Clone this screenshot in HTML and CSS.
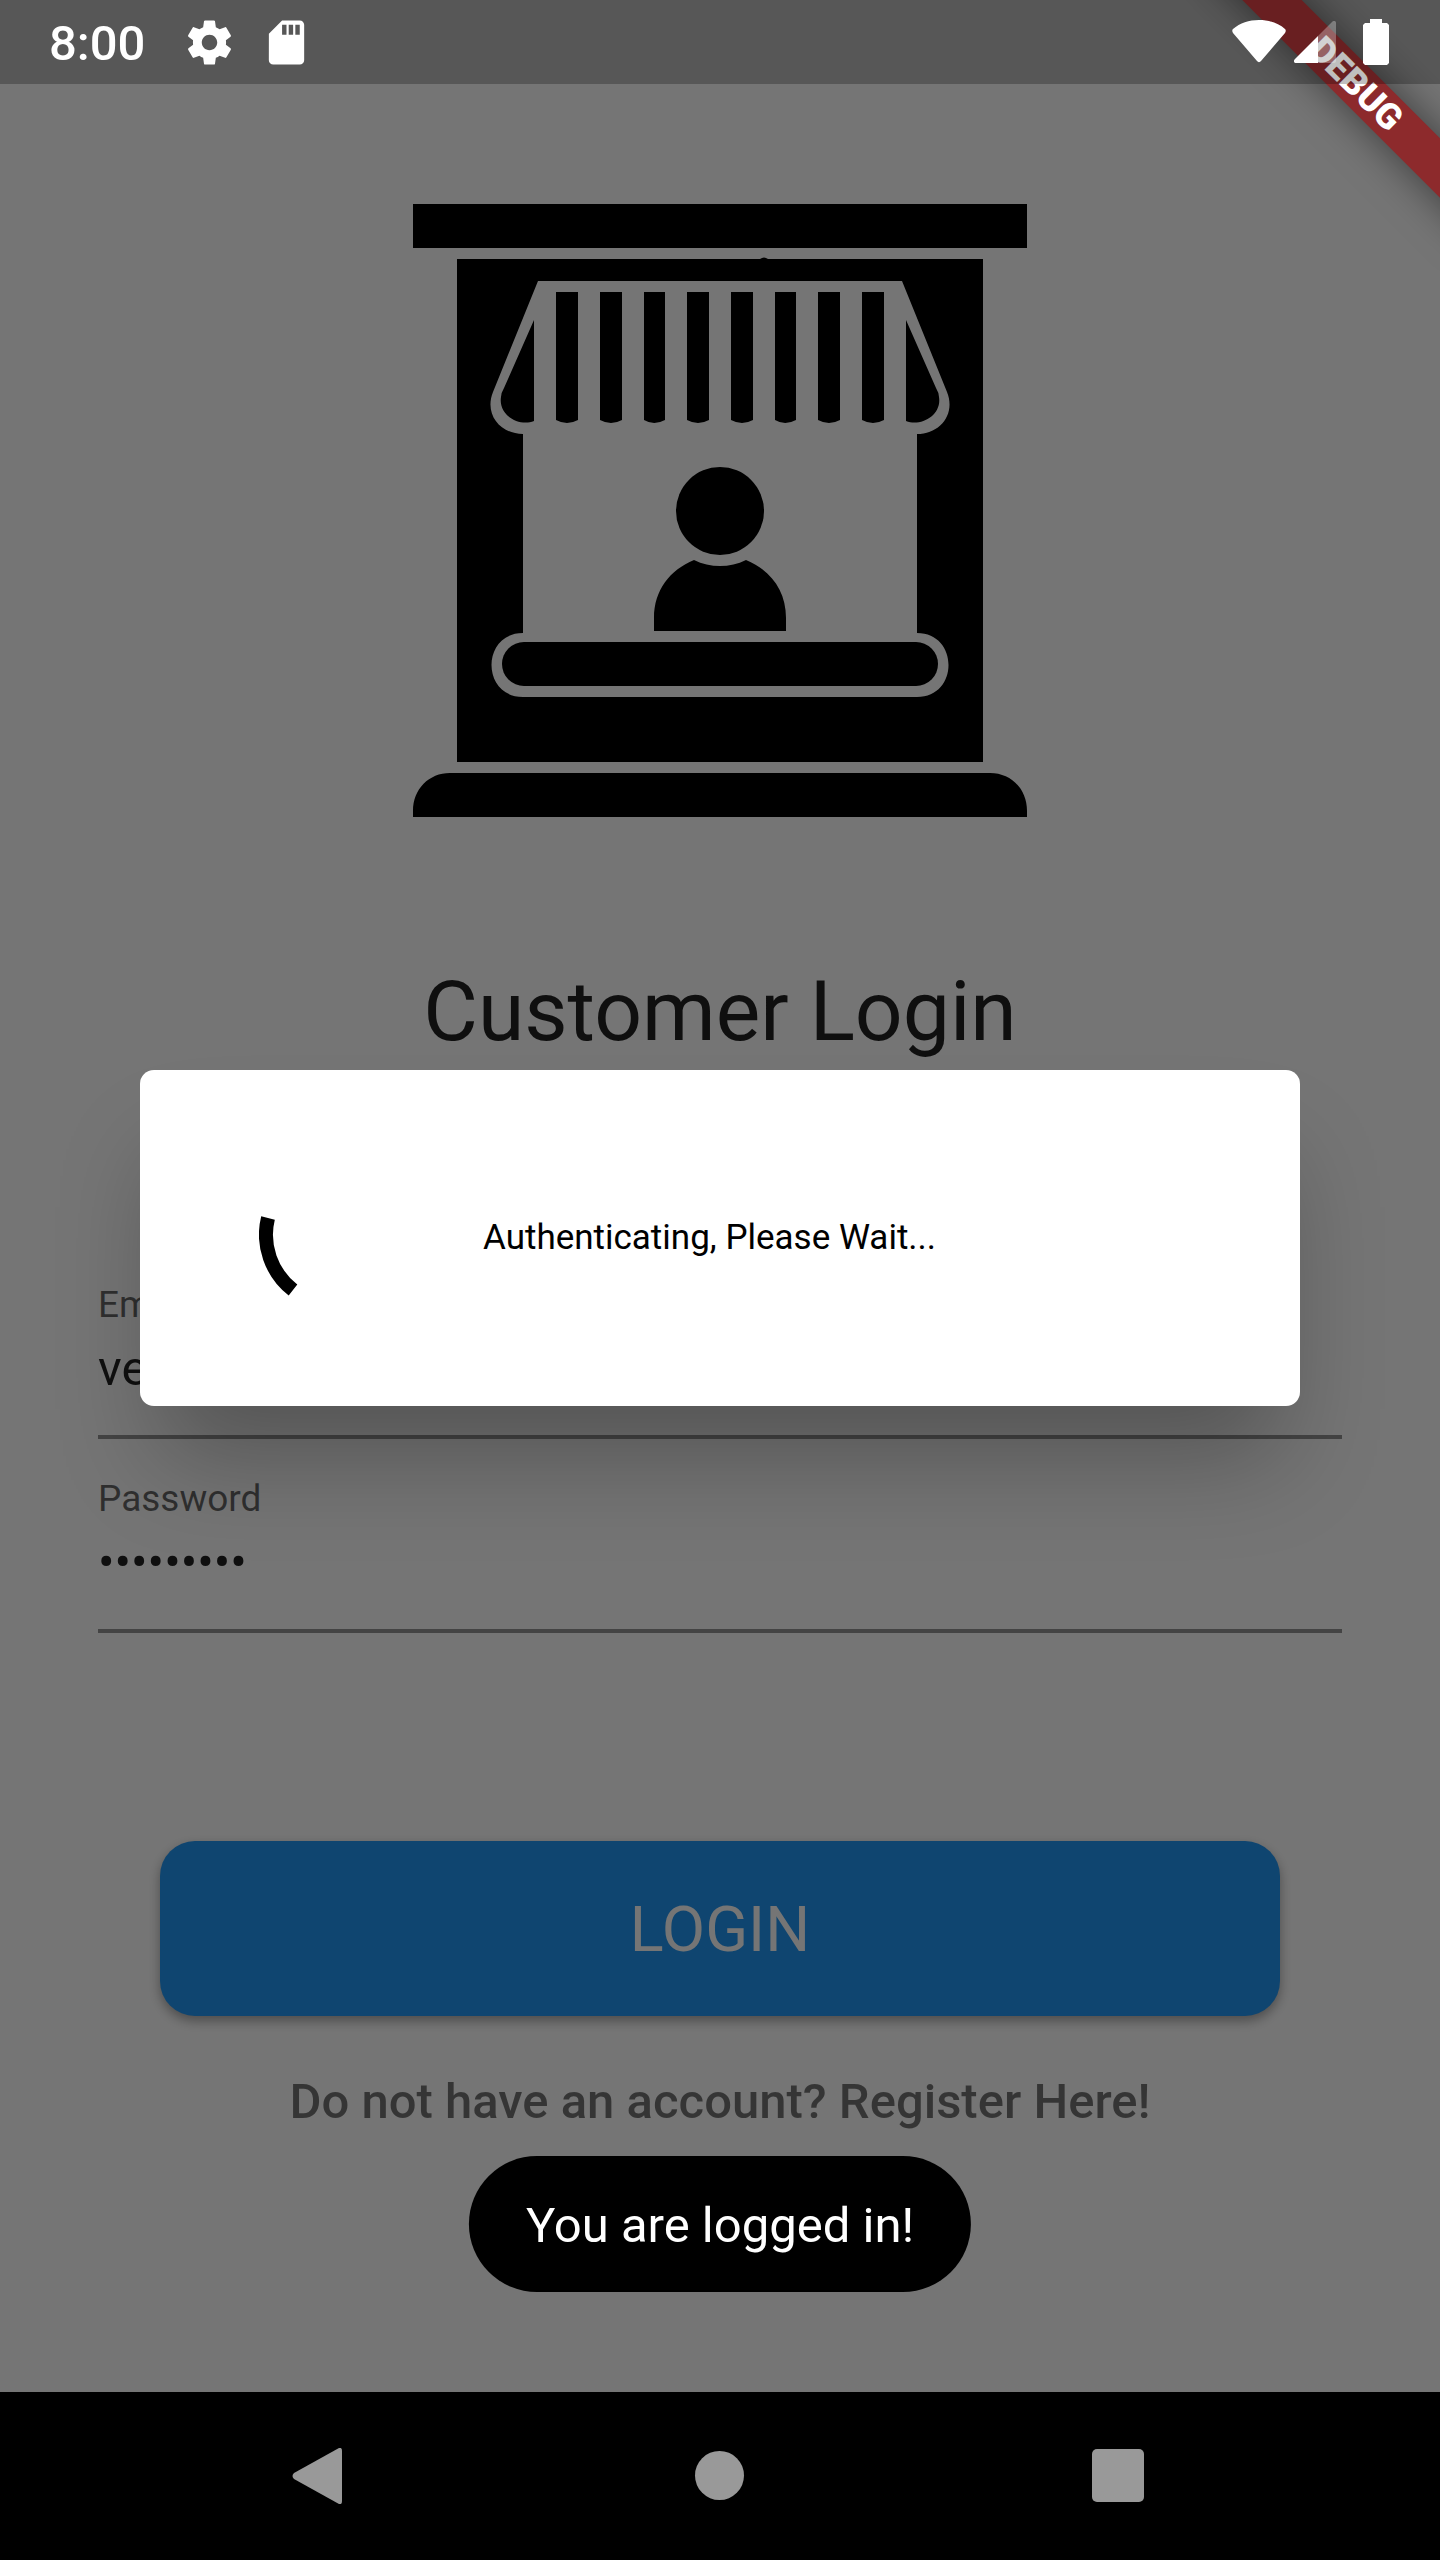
FILE: index.html
```html
<!DOCTYPE html>
<html lang="en">
<head>
<meta charset="utf-8">
<meta name="viewport" content="width=device-width, initial-scale=1">
<title>Customer Login</title>
<link rel="stylesheet" href="styles.css">
</head>
<body>
<div class="screen">
  <header class="status">
    <div class="status-group status-left">
      <span class="clock">8:00</span>
      <svg class="status-icon" viewBox="0 0 24 24" aria-hidden="true"><path d="M19.43 12.98c.04-.32.07-.64.07-.98s-.03-.66-.07-.98l2.11-1.65c.19-.15.24-.42.12-.64l-2-3.46c-.12-.22-.39-.3-.61-.22l-2.49 1c-.52-.4-1.08-.73-1.69-.98l-.38-2.65A.49.49 0 0 0 14 2h-4c-.25 0-.46.18-.49.42l-.38 2.65c-.61.25-1.17.59-1.69.98l-2.49-1c-.23-.09-.49 0-.61.22l-2 3.46c-.13.22-.07.49.12.64l2.11 1.65c-.04.32-.07.65-.07.98s.03.66.07.98l-2.11 1.65c-.19.15-.24.42-.12.64l2 3.46c.12.22.39.3.61.22l2.49-1c.52.4 1.08.73 1.69.98l.38 2.65c.03.24.24.42.49.42h4c.25 0 .46-.18.49-.42l.38-2.65c.61-.25 1.17-.59 1.69-.98l2.49 1c.23.09.49 0 .61-.22l2-3.46c.12-.22.07-.49-.12-.64l-2.11-1.65zM12 15.5c-1.93 0-3.5-1.57-3.5-3.5s1.57-3.5 3.5-3.5 3.5 1.57 3.5 3.5-1.57 3.5-3.5 3.5z"/></svg>
      <svg class="status-icon" viewBox="0 0 24 24" aria-hidden="true"><path d="M18 2h-8L4.020 8 4 20c0 1.100.9 2 2 2h12c1.100 0 2-.9 2-2V4c0-1.100-.9-2-2-2zm-6 6.500h-2V4h2v4.500zm3 0h-2V4h2v4.500zm3 0h-2V4h2v4.500z"/></svg>
    </div>
    <div class="status-group status-right">
      <svg class="wifi" viewBox="0 0 54 44" aria-hidden="true"><path d="M1 9C8 3 17 0 27 0s19 3 26 9c1 1 1 2 0 4L29 41c-1 1.500-3 1.500-4 0L1 13c-1-2-1-3 0-4z"/></svg>
      <svg class="signal" viewBox="0 0 42 42" aria-hidden="true"><path d="M24 15 38 1c2-2 4-1 4 1v38c0 1-1 2-2 2H24z" opacity=".3"/><path d="M24 15v27H2c-2 0-3-2-1-4z"/></svg>
      <svg class="battery" viewBox="0 0 26 46" aria-hidden="true"><path d="M7 0h12v4h5l2 2v38l-2 2H2l-2-2V6l2-2h5z"/></svg>
    </div>
  </header>

  <main class="content">
    <svg class="logo" viewBox="0 0 614 613" role="img" aria-label="Shop">
      <path d="M0 0h614v44H0zM0 613v-6c0-22 16-38 37-38h540c21 0 37 16 37 38v6z"/>
      <path fill-rule="evenodd" d="M44 55h303q4-3 8 0h215v503H44zM125 77 80 188c-9 22 7 42 30 42v199c-42 0-42 64 0 64h394c42 0 42-64 0-64V230c23 0 39-20 30-42L489 77z"/>
      <path d="M121 116v101c-15 6-36-6-33-24q0-4 3-9zM493 116v101c15 6 36-6 33-24q0-4-3-9z"/>
      <g id="stripes">
        <path d="M143 88h22v128q-11 6-22 0zM187 88h22v128q-11 6-22 0zM231 88h21v128q-11 6-21 0zM274 88h22v128q-11 6-22 0zM318 88h22v128q-11 6-22 0zM362 88h21v128q-11 6-21 0zM405 88h22v128q-11 6-22 0zM449 88h22v128q-11 6-22 0z"/>
      </g>
      <circle cx="307" cy="307" r="44"/>
      <path d="M241 427v-13c0-28 16-48 40-58 16 8 36 8 52 0 24 10 40 30 40 58v13z"/>
      <rect x="89" y="438" width="436" height="44" rx="22"/>
    </svg>
    <h1 class="title">Customer Login</h1>
    <form class="form">
      <div class="field">
        <label for="email">Email</label>
        <input id="email" type="text" value="ve">
      </div>
      <div class="field">
        <label for="password">Password</label>
        <input id="password" type="password" value="customer1">
      </div>
      <button class="login" type="button">LOGIN</button>
    </form>
    <a class="register" href="#register">Do not have an account? Register Here!</a>
  </main>

  <nav class="navbar">
    <button type="button" aria-label="Back"><svg viewBox="0 0 56 56"><path d="M47 0q3-1 3 3v50q0 4-3 3L2 31q-3-3 0-6z"/></svg></button>
    <button type="button" aria-label="Home"><svg viewBox="0 0 56 56"><circle cx="27.500" cy="27.500" r="24.500"/></svg></button>
    <button type="button" aria-label="Recents"><svg viewBox="0 0 56 56"><rect y="1" width="52" height="53" rx="5"/></svg></button>
  </nav>

  <div class="barrier">
    <div class="dialog" role="dialog" aria-label="Authenticating">
      <svg class="spinner" viewBox="0 0 160 160" aria-hidden="true"><path d="M9 60A70 70 0 0 0 34 132"/></svg>
      <p>Authenticating, Please Wait...</p>
    </div>
  </div>
  <div class="banner-corner"><span class="banner">DEBUG</span></div>
  <div class="toast" role="status">You are logged in!</div>
</div>
</body>
</html>
```
FILE: styles.css
```css
* { box-sizing: border-box; }

body {
  margin: 0;
  font-family: Roboto, "Liberation Sans", sans-serif;
  color: rgba(0, 0, 0, .87);
  background: #fff;
}

svg { display: block; flex: none; }

.screen {
  position: relative;
  display: flex;
  flex-direction: column;
  min-height: 100vh;
  overflow: hidden;
}

/* Status bar */
.status {
  position: relative;
  z-index: 3;
  display: flex;
  justify-content: space-between;
  align-items: center;
  height: 84px;
  padding: 0 51px 0 49px;
  background: rgba(0, 0, 0, .25);
  color: #fff;
}
.status svg { fill: #fff; }
.status-group { display: flex; align-items: center; }
.status-left { gap: 24px; }
.clock { margin-right: 14px; padding-top: 3px; font-size: 49px; line-height: 56px; font-weight: 500; }
.status-icon { width: 53px; height: 53px; }
.wifi { width: 54px; height: 44px; margin-right: 8px; }
.signal { width: 42px; height: 42px; margin-right: 27px; }
.battery { width: 26px; height: 46px; }

/* Login page */
.content {
  flex: 1;
  display: flex;
  flex-direction: column;
  align-items: center;
  padding: 120px 98px 64px;
}
.logo { width: 614px; max-width: 100%; }
.title { margin: 146px 0 0; font-size: 84px; line-height: 98px; font-weight: 400; }
.form {
  align-self: stretch;
  display: flex;
  flex-direction: column;
  gap: 38px;
  margin-top: 222px;
}
.field {
  display: flex;
  flex-direction: column;
  gap: 13px;
  padding-bottom: 37px;
  border-bottom: 4px solid rgba(0, 0, 0, .42);
}
.field label { font-size: 37px; line-height: 44px; color: rgba(0, 0, 0, .6); }
.field input {
  width: 100%;
  height: 58px;
  padding: 0;
  border: 0;
  outline: 0;
  background: transparent;
  color: inherit;
  font: 49px/58px Roboto, "Liberation Sans", sans-serif;
}
.login {
  height: 175px;
  margin: 170px 62px 0;
  padding: 2px 0 0;
  border: 0;
  border-radius: 35px;
  background: #2196f3;
  box-shadow: 0 5px 12px rgba(0, 0, 0, .35);
  color: #fff;
  font: 63px/74px Roboto, "Liberation Sans", sans-serif;
}
.register {
  margin-top: 57px;
  font-size: 49px;
  line-height: 58px;
  font-weight: 500;
  color: rgba(0, 0, 0, .54);
  text-decoration: none;
}

/* System navigation */
.navbar {
  position: relative;
  z-index: 3;
  display: flex;
  justify-content: center;
  height: 168px;
  background: #000;
}
.navbar button {
  display: flex;
  justify-content: center;
  align-items: center;
  flex: 0 1 400px;
  padding: 0;
  border: 0;
  background: none;
}
.navbar svg { width: 56px; height: 56px; fill: #999; }

/* Modal dialog */
.barrier {
  position: absolute;
  inset: 0;
  z-index: 1;
  display: flex;
  align-items: center;
  padding: 84px 140px 168px;
  background: rgba(0, 0, 0, .54);
}
.dialog {
  flex: 1;
  display: flex;
  align-items: center;
  gap: 64px;
  height: 336px;
  padding: 0 119px;
  border-radius: 14px;
  background: #fff;
  box-shadow: 0 70px 100px -20px rgba(0, 0, 0, .28);
  color: #000;
}
.dialog p { margin: 0; font-size: 35px; line-height: 42px; }
.spinner { width: 160px; height: 160px; fill: none; stroke: #000; stroke-width: 14px; }

/* Corner ribbon */
.banner-corner {
  position: absolute;
  top: 0;
  right: 0;
  z-index: 2;
  width: 280px;
  height: 280px;
  overflow: hidden;
}
.banner {
  position: absolute;
  top: 63px;
  right: -116px;
  width: 400px;
  background: #8d2a2c;
  box-shadow: 0 0 42px rgba(0, 0, 0, .5);
  color: #fff;
  font-size: 36px;
  line-height: 42px;
  font-weight: 900;
  text-align: center;
  transform: rotate(45deg);
}

/* Toast */
.toast {
  position: absolute;
  z-index: 2;
  bottom: 268px;
  left: 50%;
  transform: translateX(-50%);
  padding: 44px 57px 40px;
  border-radius: 68px;
  background: #000;
  color: #fff;
  font-size: 49px;
  line-height: 52px;
  white-space: nowrap;
}
```
